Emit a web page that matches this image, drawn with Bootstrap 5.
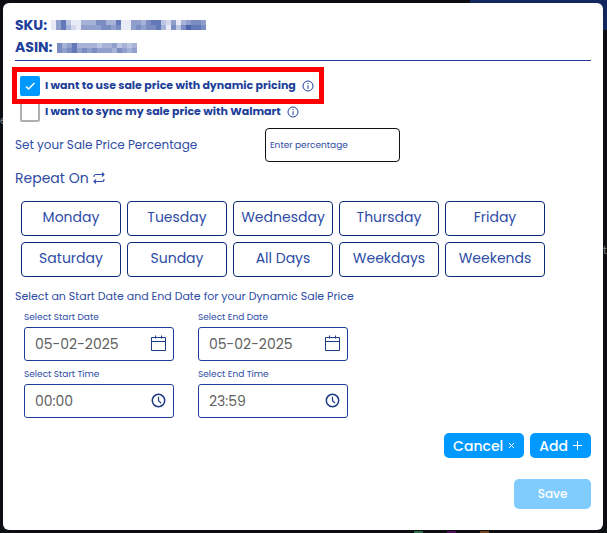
<!DOCTYPE html>
<html lang="en">
<head>
<meta charset="utf-8">
<meta name="viewport" content="width=device-width, initial-scale=1">
<title>Dynamic sale price</title>
<link href="https://cdn.jsdelivr.net/npm/bootstrap@5.3.0/dist/css/bootstrap.min.css" rel="stylesheet">
<style>
:root { --ink: #213f9a; --soft: #2e4ca6; --sky: #0099ff; }
body { font-family: Poppins, Inter, "Open Sans", sans-serif; color: var(--soft); font-size: 12px; line-height: 20px; background: #0c0e12; min-height: 100vh; }
.page-behind { position: absolute; inset: 0; overflow: hidden; z-index: -1; color: #777; }
.page-behind .banner { position: absolute; top: 0; right: 0; width: 137px; height: 30px; background: #14265f; }
.page-behind .dots { position: absolute; right: 117px; bottom: 0; }
.page-behind .edge-text { position: absolute; left: 0; top: 110px; font-size: 11px; }
.page-behind .edge-text-end { position: absolute; right: 0; top: 240px; font-size: 11px; }
.panel { margin: 3px 4px 3px 3px; padding: 11px 12px 21px; border-radius: 6px; background: #fff; }
.ids { font-size: 14px; line-height: 22px; font-weight: 700; color: var(--ink); padding-bottom: 2px; border-bottom: 1px solid var(--ink); }
.options { margin-top: 12px; }
.opt { height: 26px; padding-left: 5px; font-size: 11px; line-height: 18px; font-weight: 700; gap: 5px; color: var(--ink); }
.opt label { padding-bottom: 2px; }
.opt svg { margin-left: 1px; }
.opt .form-check-input { width: 20px; height: 20px; border: 2px solid #b0b0b0; border-radius: 2px; box-shadow: none; }
.opt .form-check-input:checked { background-color: var(--sky); border-color: var(--sky); background-image: url("data:image/svg+xml,%3csvg xmlns='http://www.w3.org/2000/svg' viewBox='0 0 16 16'%3e%3cpath fill='none' stroke='%23fff' stroke-width='1.5' d='M4 8.500l2.500 2.500L12.500 5'/%3e%3c/svg%3e"); }
.marked::after { content: ""; position: absolute; inset: -6px auto -5px -3px; width: 312px; border: 5px solid #f00; pointer-events: none; z-index: 1; }
.percent-row { gap: 12px; margin-top: 3px; }
.percent-label { width: 238px; }
.percent { width: 135px; height: 34px; padding: 0 4px; font-size: 9px; border: 1px solid #111; border-radius: 4px; color: var(--soft); }
.percent::placeholder { color: var(--soft); opacity: 1; }
.repeat { font-size: 14px; gap: 4px; margin: 6px 0 13px; }
.days { gap: 6px; padding: 0 6px; }
.day { width: 100px; height: 35px; padding: 0 0 3px; font-size: 14px; color: var(--soft); border: 1px solid #0b2a78; border-radius: 4px; }
.range-title { font-size: 11px; margin: 9px 0 5px; }
.range { padding-left: 9px; column-gap: 24px; }
.range + .range { margin-top: 7px; }
.range-item { width: 150px; }
.range-item label { font-size: 9px; line-height: 12px; }
.range-item .form-control { height: 34px; padding: 0 36px 0 10px; font-size: 14px; color: #606060; border: 1px solid #213f9a; border-radius: 3px; }
.picker { position: absolute; right: 7px; top: 8px; line-height: 0; color: #1d3a87; }
.act { height: 25px; padding: 0 9px; font-size: 14px; line-height: 20px; font-weight: 500; color: #fff; background: var(--sky); border-radius: 5px; gap: 5px; }
.save { width: 77px; height: 30px; font-size: 12px; font-weight: 500; color: #fff; padding: 0; border-radius: 5px; border: 0; }
.save:disabled { background: #80ccff; color: #fff; opacity: 1; }
.actions { gap: 6px; margin: 15px 0 21px; }
</style>
</head>
<body>
<div class="page-behind" aria-hidden="true">
  <div class="banner"></div>
  <span class="edge-text">e</span>
  <span class="edge-text-end">t</span>
  <svg class="dots" width="76" height="2" viewBox="0 0 76 2"><rect width="9" height="2" x="0" fill="#2f6b4a"/><rect width="9" height="2" x="33" fill="#4c0c58"/><rect width="9" height="2" x="66" fill="#77441b"/></svg>
</div>
<main class="panel">
  <header class="ids">
    <div class="d-flex align-items-center gap-1">SKU:
      <svg width="155" height="14" viewBox="0 0 155 14" shape-rendering="crispEdges" role="img" aria-label="Hidden SKU"><g id="sku"></g></svg></div>
    <div class="d-flex align-items-center gap-1">ASIN:
      <svg width="80" height="12" viewBox="0 0 80 12" shape-rendering="crispEdges" role="img" aria-label="Hidden ASIN"><g id="asin"></g></svg></div>
  </header>

  <div class="options">
    <div class="opt marked position-relative d-flex align-items-center">
      <input class="form-check-input m-0 flex-shrink-0" type="checkbox" id="dyn" checked>
      <label for="dyn">I want to use sale price with dynamic pricing</label>
      <svg width="12" height="12" viewBox="0 0 12 12" fill="none" stroke="currentColor"><circle cx="6" cy="6" r="5"/><path d="M6 5.200V9M6 3v1.200"/></svg>
    </div>
    <div class="opt d-flex align-items-center">
      <input class="form-check-input m-0 flex-shrink-0" type="checkbox" id="sync">
      <label for="sync">I want to sync my sale price with Walmart</label>
      <svg width="12" height="12" viewBox="0 0 12 12" fill="none" stroke="currentColor"><circle cx="6" cy="6" r="5"/><path d="M6 5.200V9M6 3v1.200"/></svg>
    </div>
  </div>

  <div class="percent-row d-flex align-items-center">
    <label class="percent-label" for="pct">Set your Sale Price Percentage</label>
    <input class="percent" id="pct" type="text" placeholder="Enter percentage">
  </div>

  <div class="repeat d-flex align-items-center">Repeat On
    <svg width="12" height="12" viewBox="0 0 12 12" fill="none" stroke="currentColor" stroke-width="1.100"><path d="M1 5V4.500a2 2 0 0 1 2-2h8M9 .5l2 2-2 2M11 7v.5a2 2 0 0 1-2 2H1M3 7.500l-2 2 2 2"/></svg>
  </div>

  <div class="days d-flex flex-wrap">
    <button class="btn day" type="button">Monday</button>
    <button class="btn day" type="button">Tuesday</button>
    <button class="btn day" type="button">Wednesday</button>
    <button class="btn day" type="button">Thursday</button>
    <button class="btn day" type="button">Friday</button>
    <button class="btn day" type="button">Saturday</button>
    <button class="btn day" type="button">Sunday</button>
    <button class="btn day" type="button">All Days</button>
    <button class="btn day" type="button">Weekdays</button>
    <button class="btn day" type="button">Weekends</button>
  </div>

  <div class="range-title">Select an Start Date and End Date for your Dynamic Sale Price</div>
  <div class="range d-flex flex-wrap">
    <div class="range-item">
      <label class="d-block mb-1" for="sd">Select Start Date</label>
      <div class="position-relative"><input class="form-control" id="sd" type="text" value="05-02-2025">
        <button class="picker btn p-0 border-0" type="button" aria-label="Open calendar"><svg width="17" height="17" viewBox="0 0 17 17" fill="none" stroke="currentColor"><path d="M1.500 2.500h14v13h-14zM1.500 6.500h14M5.500.5v3M11.500.5v3"/></svg></button></div>
    </div>
    <div class="range-item">
      <label class="d-block mb-1" for="ed">Select End Date</label>
      <div class="position-relative"><input class="form-control" id="ed" type="text" value="05-02-2025">
        <button class="picker btn p-0 border-0" type="button" aria-label="Open calendar"><svg width="17" height="17" viewBox="0 0 17 17" fill="none" stroke="currentColor"><path d="M1.500 2.500h14v13h-14zM1.500 6.500h14M5.500.5v3M11.500.5v3"/></svg></button></div>
    </div>
  </div>
  <div class="range d-flex flex-wrap">
    <div class="range-item">
      <label class="d-block mb-1" for="st">Select Start Time</label>
      <div class="position-relative"><input class="form-control" id="st" type="text" value="00:00">
        <button class="picker btn p-0 border-0" type="button" aria-label="Open clock"><svg width="17" height="17" viewBox="0 0 17 17" fill="none" stroke="currentColor" stroke-width="1.500"><circle cx="8.500" cy="8.500" r="6.200"/><path stroke-width="1.200" d="M8.500 4.800v4l2.500 2.200"/></svg></button></div>
    </div>
    <div class="range-item">
      <label class="d-block mb-1" for="et">Select End Time</label>
      <div class="position-relative"><input class="form-control" id="et" type="text" value="23:59">
        <button class="picker btn p-0 border-0" type="button" aria-label="Open clock"><svg width="17" height="17" viewBox="0 0 17 17" fill="none" stroke="currentColor" stroke-width="1.500"><circle cx="8.500" cy="8.500" r="6.200"/><path stroke-width="1.200" d="M8.500 4.800v4l2.500 2.200"/></svg></button></div>
    </div>
  </div>

  <div class="actions d-flex justify-content-end">
    <button class="btn act border-0 d-flex align-items-center" type="button">Cancel <svg width="7" height="7" viewBox="0 0 7 7" stroke="currentColor"><path d="M1 1l5 5M6 1L1 6"/></svg></button>
    <button class="btn act border-0 d-flex align-items-center" type="button">Add <svg width="9" height="9" viewBox="0 0 9 9" stroke="currentColor"><path d="M4.500 0v9M0 4.500h9"/></svg></button>
  </div>
  <div class="d-flex justify-content-end">
    <button class="btn save" type="button" disabled>Save</button>
  </div>
</main>
<script src="https://cdn.jsdelivr.net/npm/bootstrap@5.3.0/dist/js/bootstrap.bundle.min.js"></script>
<script>
// Each character is the darkness of one 5px tile in a masked value.
const mask = (id, rows, tileHeight) => {
  document.getElementById(id).innerHTML = rows.map((row, y) => [...row].map((c, x) =>
    `<rect x="${x * 5}" y="${2 + y * tileHeight}" width="5" height="${tileHeight}" fill="#213f9a" opacity="${c / 10}"/>`).join('')).join('');
};
mask('sku', ['1573114446644711554677325145665', '1574215555665611565667416368776'], 5);
mask('asin', ['6457444434453434', '6567565655546545'], 5);
</script>
</body>
</html>
